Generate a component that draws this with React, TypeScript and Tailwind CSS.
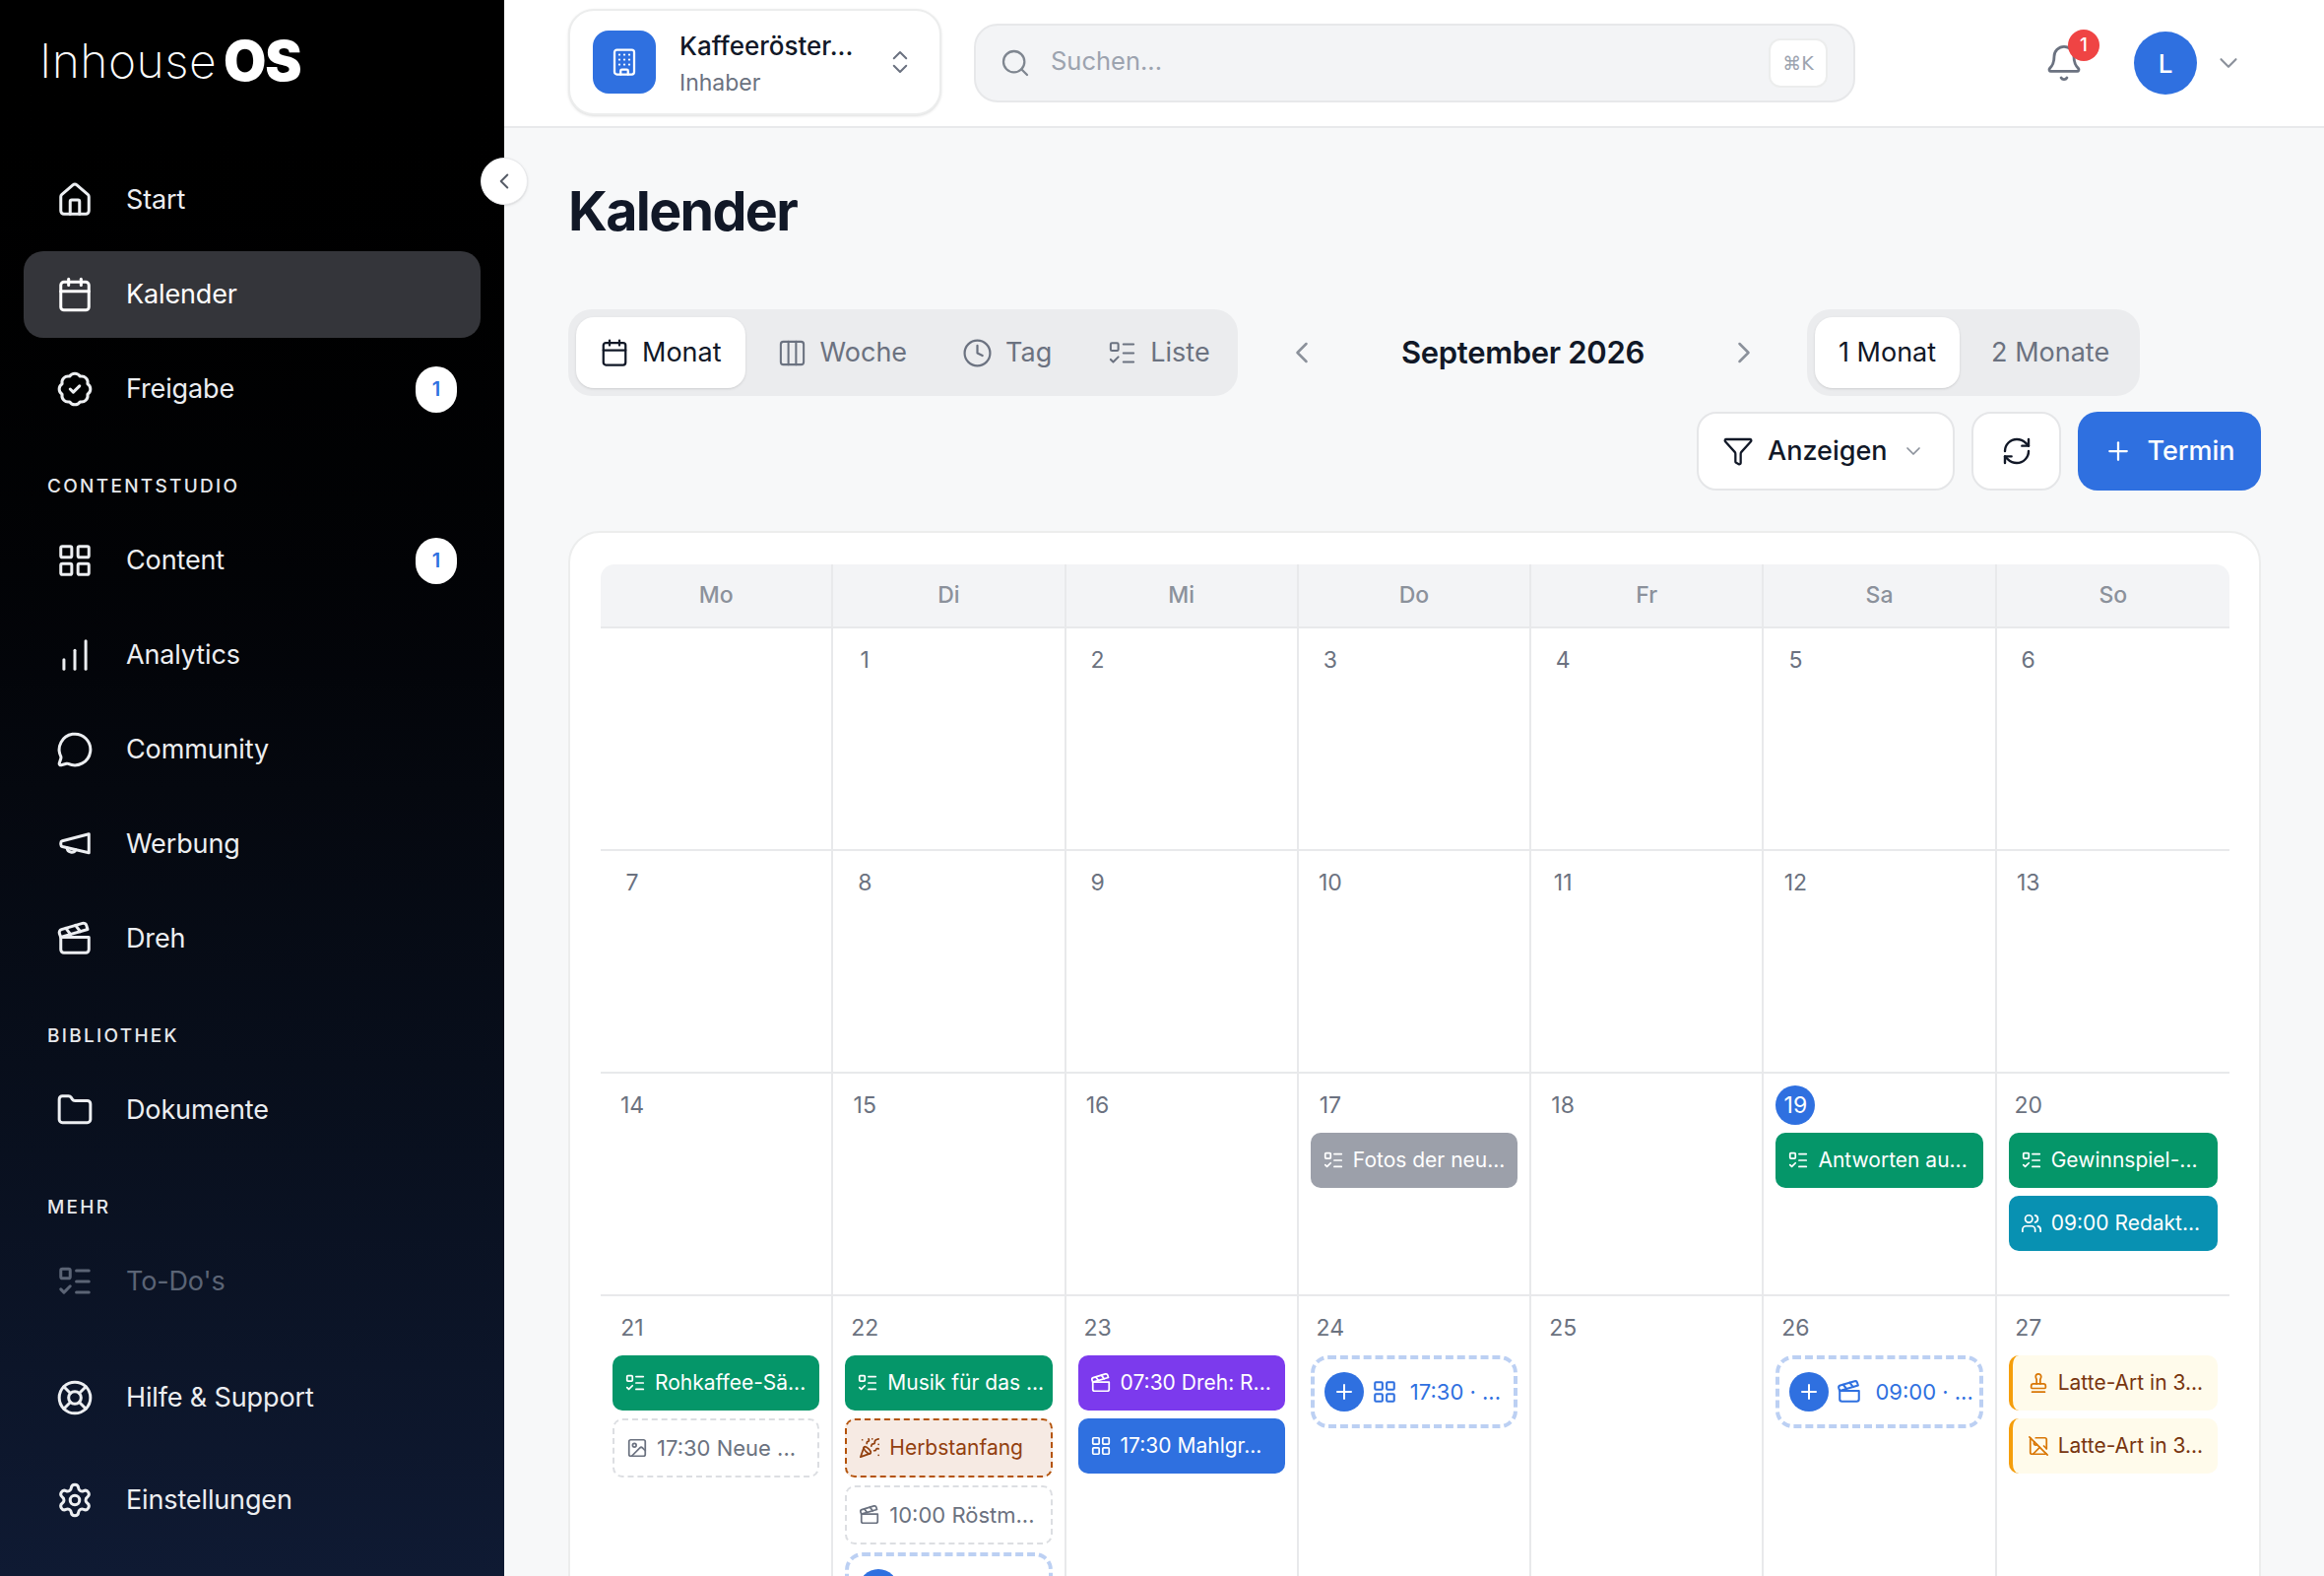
import {
  Bell, BadgeCheck, Building, Calendar, ChartNoAxesColumnIncreasing, ChevronDown, ChevronLeft, ChevronRight, ChevronsUpDown,
  Clapperboard, Clock, Columns3, Folder, Funnel, House, ImageOff, Image, LayoutGrid, LifeBuoy, ListTodo, MessageCircle,
  PartyPopper, Plus, RefreshCw, Search, Settings, Stamp, Users,
} from 'lucide-react';
import type { ReactNode } from 'react';

const font = 'font-["Inter","Liberation_Sans",sans-serif]';

const Megaphone = ({ size = 38 }: { size?: number }) => (
  <svg width={size} height={size} viewBox="0 0 24 24" fill="none" stroke="currentColor" strokeWidth={1.9} strokeLinejoin="round" strokeLinecap="round">
    <path d="M21 5.5v12L4 13.6a1.5 1.5 0 0 1-1-1.4v-.9a1.5 1.5 0 0 1 1-1.4z" />
    <path d="M7 14.4a3 3 0 0 0 5.6 1.2" />
  </svg>
);

const NavItem = ({ icon, label, badge, active, dim }: { icon: ReactNode; label: string; badge?: boolean; active?: boolean; dim?: boolean }) => (
  <div className={`h-[88px] rounded-[20px] flex items-center pl-[33px] pr-6 ${active ? 'bg-[#34353a] text-white' : dim ? 'text-[#5b6475]' : 'text-[#eceef1]'}`}>
    <span className="w-[38px] flex justify-center shrink-0">{icon}</span>
    <span className="ml-[33px] text-[27px] tracking-[-0.005em]">{label}</span>
    {badge && (
      <span className="ml-auto w-[42px] h-[47px] rounded-full bg-white text-[#2f70e0] text-[20px] font-semibold flex items-center justify-center">1</span>
    )}
  </div>
);

const SectionLabel = ({ children }: { children: string }) => (
  <div className="h-[86px] flex items-center pl-6 pt-6 text-[#e6e8ec] text-[19px] font-medium tracking-[0.12em]">{children}</div>
);

const Sidebar = () => (
  <aside className="w-[512px] h-[1600px] shrink-0 bg-gradient-to-b from-[#000000] via-[#05080f] to-[#0f1a33] flex flex-col px-6">
    <div className="h-[159px] pt-[27px] pl-4 flex items-start text-white">
      <span className="text-[48px] font-extralight tracking-[0.01em] leading-[70px]">Inhouse</span>
      <span className="ml-[7px] text-[56px] font-black tracking-[-0.02em] leading-[70px]">OS</span>
    </div>
    <nav className="flex flex-col gap-2">
      <NavItem icon={<House size={38} strokeWidth={1.9} />} label="Start" />
      <NavItem active icon={<Calendar size={38} strokeWidth={1.9} />} label="Kalender" />
      <NavItem badge icon={<BadgeCheck size={40} strokeWidth={1.9} />} label="Freigabe" />
    </nav>
    <SectionLabel>CONTENTSTUDIO</SectionLabel>
    <nav className="flex flex-col gap-2">
      <NavItem badge icon={<LayoutGrid size={38} strokeWidth={1.9} />} label="Content" />
      <NavItem icon={<ChartNoAxesColumnIncreasing size={38} strokeWidth={1.9} />} label="Analytics" />
      <NavItem icon={<MessageCircle size={40} strokeWidth={1.9} />} label="Community" />
      <NavItem icon={<Megaphone />} label="Werbung" />
      <NavItem icon={<Clapperboard size={38} strokeWidth={1.9} />} label="Dreh" />
    </nav>
    <SectionLabel>BIBLIOTHEK</SectionLabel>
    <NavItem icon={<Folder size={40} strokeWidth={1.9} />} label="Dokumente" />
    <SectionLabel>MEHR</SectionLabel>
    <NavItem dim icon={<ListTodo size={38} strokeWidth={1.9} />} label="To-Do's" />
    <div className="mt-auto pb-[33px] flex flex-col gap-4">
      <NavItem icon={<LifeBuoy size={40} strokeWidth={1.9} />} label="Hilfe & Support" />
      <NavItem icon={<Settings size={38} strokeWidth={1.9} />} label="Einstellungen" />
    </div>
  </aside>
);

const Header = () => (
  <header className="h-[130px] shrink-0 bg-white border-b-2 border-[#e8e9eb] flex items-center pl-[65px] pr-[64px] text-[#111827]">
    <div className="w-[379px] h-[108px] mb-[2px] rounded-[26px] bg-white border-2 border-[#eceded] shadow-sm flex items-center pl-[23px]">
      <div className="w-16 h-16 rounded-2xl bg-[#2f70e0] flex items-center justify-center text-white shrink-0">
        <Building size={30} strokeWidth={1.8} />
      </div>
      <div className="ml-6 pt-1 flex flex-col w-[190px]">
        <span className="text-[26px] font-medium leading-[38px] whitespace-nowrap">Kaffeeröster...</span>
        <span className="text-[23px] text-[#6b7280] leading-[36px]">Inhaber</span>
      </div>
      <ChevronsUpDown size={30} strokeWidth={1.6} className="ml-[19px] text-[#6b7280]" />
    </div>
    <div className="ml-[33px] w-[895px] h-[80px] rounded-[24px] bg-[#f3f4f6] border-2 border-[#e7e8ea] flex items-center pl-[24px] pr-[26px]">
      <Search size={32} strokeWidth={1.7} className="text-[#7f8690]" />
      <span className="ml-[20px] pb-[3px] text-[25.5px] text-[#9ca3af]">Suchen...</span>
      <span className="ml-auto w-[60px] h-[50px] rounded-xl bg-white border-2 border-[#eceded] text-[#9ca3af] text-[19px] flex items-center justify-center font-['DejaVu_Sans',sans-serif]">⌘K</span>
    </div>
    <div className="relative ml-[192px] w-[40px] h-[40px] flex items-center justify-center text-[#6b7280]">
      <Bell size={40} strokeWidth={1.7} />
      <span className="absolute -top-[14px] left-[24px] w-[32px] h-[32px] rounded-full bg-[#ef4444] text-white text-[19px] font-medium flex items-center justify-center">1</span>
    </div>
    <div className="ml-[51px] w-16 h-16 rounded-full bg-[#2f70e0] text-white text-[26px] font-medium flex items-center justify-center">L</div>
    <ChevronDown size={30} strokeWidth={1.7} className="ml-[17px] text-[#8b919b]" />
  </header>
);

const Tab = ({ icon, label, active }: { icon?: ReactNode; label: string; active?: boolean }) => (
  <div className={`h-[72px] rounded-[18px] flex items-center gap-[13px] px-[24px] text-[27px] whitespace-nowrap ${active ? 'bg-white text-[#111827] shadow-sm' : 'text-[#6b7280]'}`}>
    {icon}
    <span>{label}</span>
  </div>
);

const Toolbar = () => (
  <div className="flex flex-wrap justify-end gap-y-4">
    <div className="w-full flex items-center">
      <div className="h-[88px] w-[680px] rounded-[24px] bg-[#ebecee] flex items-center gap-2 px-2">
        <Tab active icon={<Calendar size={30} strokeWidth={1.8} />} label="Monat" />
        <Tab icon={<Columns3 size={31} strokeWidth={1.6} />} label="Woche" />
        <Tab icon={<Clock size={31} strokeWidth={1.7} />} label="Tag" />
        <Tab icon={<ListTodo size={31} strokeWidth={1.6} />} label="Liste" />
      </div>
      <ChevronLeft size={36} strokeWidth={1.7} className="ml-[47px] text-[#8b919b]" />
      <span className="w-[389px] mx-[12px] text-center text-[31px] font-semibold text-[#111827] tracking-[-0.01em]">September 2026</span>
      <ChevronRight size={36} strokeWidth={1.7} className="text-[#8b919b]" />
      <div className="ml-[46px] h-[88px] w-[338px] rounded-[24px] bg-[#ebecee] flex items-center gap-2 px-2">
        <Tab active label="1 Monat" />
        <Tab label="2 Monate" />
      </div>
    </div>
    <div className="flex items-center gap-[17px]">
      <div className="w-[262px] h-[80px] rounded-[20px] bg-white border-2 border-[#e5e6e8] flex items-center pl-[24px] text-[#111827]">
        <Funnel size={32} strokeWidth={1.7} />
        <span className="ml-[14px] text-[27px] font-medium">Anzeigen</span>
        <ChevronDown size={24} strokeWidth={1.7} className="ml-[14px] text-[#8b919b]" />
      </div>
      <div className="w-[91px] h-[80px] rounded-[20px] bg-white border-2 border-[#e5e6e8] flex items-center justify-center text-[#111827]">
        <RefreshCw size={32} strokeWidth={1.8} />
      </div>
      <div className="w-[186px] h-[80px] rounded-[20px] bg-[#2f70e0] text-white flex items-center justify-center gap-[14px]">
        <Plus size={30} strokeWidth={1.8} />
        <span className="text-[27px] font-medium">Termin</span>
      </div>
    </div>
  </div>
);

const Ev = ({ icon, label, className }: { icon: ReactNode; label: string; className: string }) => (
  <div className={`flex items-center gap-[9px] pl-[12px] pr-2 text-[21px] whitespace-nowrap overflow-hidden ${className}`}>
    <span className="shrink-0 flex">{icon}</span>
    <span>{label}</span>
  </div>
);

const solid = 'h-[56px] rounded-[10px] text-white';
const ghost = 'h-[60px] rounded-[10px] border-2 border-dashed border-[#dcdee2] bg-white text-[#6b7280] !text-[22px]';
const latte = 'h-[56px] rounded-[10px] border-l-4 border-[#f59e0b] bg-[#fffbeb] text-[#78350f] !pl-[15px]';

const Plan = ({ icon, label }: { icon: ReactNode; label: string }) => (
  <div className="h-[74px] rounded-[18px] border-[4px] border-dashed border-[#bcd0f3] flex items-center gap-[8px] pl-[10px] text-[#2f70e0] text-[22px] whitespace-nowrap">
    <span className="w-10 h-10 rounded-full bg-[#2f70e0] text-white flex items-center justify-center shrink-0"><Plus size={24} strokeWidth={2} /></span>
    <span className="shrink-0 flex">{icon}</span>
    <span className="ml-[5px]">{label}</span>
  </div>
);

const ic = { size: 22, strokeWidth: 1.9 };
const planIc = { size: 26, strokeWidth: 1.9 };

const events: Record<number, ReactNode> = {
  17: <Ev icon={<ListTodo {...ic} />} label="Fotos der neu..." className={`${solid} bg-[#9ca0aa]`} />,
  19: <Ev icon={<ListTodo {...ic} />} label="Antworten au..." className={`${solid} bg-[#059669]`} />,
  20: (
    <>
      <Ev icon={<ListTodo {...ic} />} label="Gewinnspiel-..." className={`${solid} bg-[#059669]`} />
      <Ev icon={<Users {...ic} />} label="09:00 Redakt..." className={`${solid} bg-[#0891b2]`} />
    </>
  ),
  21: (
    <>
      <Ev icon={<ListTodo {...ic} />} label="Rohkaffee-Sä..." className={`${solid} bg-[#059669]`} />
      <Ev icon={<Image {...ic} />} label="17:30 Neue ..." className={ghost} />
    </>
  ),
  22: (
    <>
      <Ev icon={<ListTodo {...ic} />} label="Musik für das ..." className={`${solid} bg-[#059669]`} />
      <Ev icon={<PartyPopper {...ic} />} label="Herbstanfang" className="h-[60px] rounded-[10px] border-2 border-dashed border-[#b45309] bg-[#f6eae3] text-[#92400e]" />
      <Ev icon={<Clapperboard {...ic} />} label="10:00 Röstm..." className={ghost} />
      <Plan icon={<LayoutGrid {...planIc} />} label="" />
    </>
  ),
  23: (
    <>
      <Ev icon={<Clapperboard {...ic} />} label="07:30 Dreh: R..." className={`${solid} bg-[#7c3aed]`} />
      <Ev icon={<LayoutGrid {...ic} />} label="17:30 Mahlgr..." className={`${solid} bg-[#2f70e0]`} />
    </>
  ),
  24: <Plan icon={<LayoutGrid {...planIc} />} label="17:30 · ..." />,
  26: <Plan icon={<Clapperboard {...planIc} />} label="09:00 · ..." />,
  27: (
    <>
      <Ev icon={<Stamp {...ic} className="text-[#d97706]" />} label="Latte-Art in 3..." className={latte} />
      <Ev icon={<ImageOff {...ic} className="text-[#d97706]" />} label="Latte-Art in 3..." className={latte} />
    </>
  ),
};

const weekdays = ['Mo', 'Di', 'Mi', 'Do', 'Fr', 'Sa', 'So'];
const leading = [0];
const days = [...leading, ...Array.from({ length: 27 }, (_, i) => i + 1)];

const CalendarCard = () => (
  <div className="mt-[41px] rounded-[32px] border-2 border-[#eceded] bg-white pl-[31px] pr-[30px] pt-[32px]">
    <div className="grid grid-cols-7 h-[65px] bg-[#f3f4f6] rounded-t-[14px] border-b-2 border-[#e8e9eb]">
      {weekdays.map((d, i) => (
        <div key={d} className={`flex items-center justify-center text-[23px] font-medium text-[#8b919b] ${i < 6 ? 'border-r-2 border-[#e8e9eb]' : ''}`}>{d}</div>
      ))}
    </div>
    <div className="grid grid-cols-7">
      {days.map((d, i) => (
        <div key={i} className={`h-[226px] border-b-2 border-[#e8e9eb] px-3 pt-[12px] ${i % 7 < 6 ? 'border-r-2' : ''} ${d > 20 ? 'h-[400px]' : ''}`}>
          {d > 0 && (
            <div className={`w-10 h-10 flex items-center justify-center text-[23px] rounded-full ${d === 19 ? 'bg-[#2f70e0] text-white' : 'text-[#6b7280]'}`}>{d}</div>
          )}
          <div className="mt-[8px] flex flex-col gap-2">{events[d]}</div>
        </div>
      ))}
    </div>
  </div>
);

const App = () => (
  <div className={`relative w-[2360px] h-[1600px] overflow-hidden flex ${font}`}>
    <Sidebar />
    <div className="flex-1 min-w-0 h-full flex flex-col bg-[#f7f8f9]">
      <Header />
      <main className="flex-1 overflow-hidden pl-[65px] pr-[64px]">
        <h1 className="mt-[50px] text-[55.5px] leading-[68px] font-bold text-[#111827] tracking-[-0.03em]">Kalender</h1>
        <div className="mt-[66px]"><Toolbar /></div>
        <CalendarCard />
      </main>
    </div>
    <div className="absolute left-[488px] top-[160px] w-[48px] h-[48px] rounded-full bg-white border border-[#e8e9eb] shadow-sm flex items-center justify-center text-[#555b66]">
      <ChevronLeft size={26} strokeWidth={1.8} />
    </div>
  </div>
);

export default App;
